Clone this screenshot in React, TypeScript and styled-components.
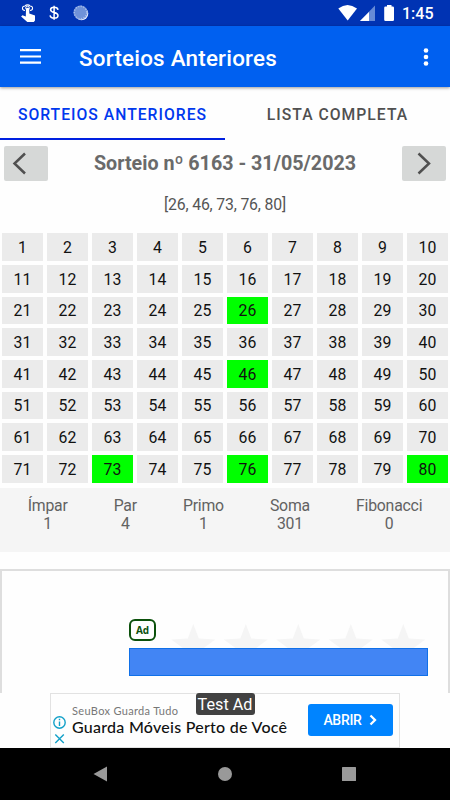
import React from "react";
import styled, { createGlobalStyle } from "styled-components";

const GlobalStyle = createGlobalStyle`
  * { box-sizing: border-box; }
  body { margin: 0; background: #fefefe; }
`;

const Screen = styled.div`
  width: 450px;
  height: 800px;
  display: flex;
  flex-direction: column;
  overflow: hidden;
  background: #fefefe;
  font-family: Roboto, sans-serif;
  color: #000;
  white-space: nowrap;
`;

const StatusBar = styled.header`
  height: 26px;
  flex: none;
  display: flex;
  align-items: center;
  background: #0033b3;
  color: #fff;
`;

const StatusIcons = styled.svg`
  display: block;
  flex: none;
`;

const Clock = styled.span`
  margin-left: 8px;
  font-size: 16px;
  font-weight: 500;
  line-height: 26px;
  padding-top: 2px;
`;

const AppBar = styled.div`
  height: 61px;
  flex: none;
  display: flex;
  align-items: center;
  padding: 0 18px 0 20px;
  background: #0060f0;
  color: #fff;
  box-shadow: 0 1px 3px rgba(0, 0, 0, 0.4);
  z-index: 1;
`;

const Title = styled.h1`
  margin: 2px auto 0 38px;
  font-size: 22.4px;
  font-weight: 500;
  line-height: 28px;
  letter-spacing: 0.22px;
`;

const Tabs = styled.nav`
  flex: none;
  height: 53px;
  display: grid;
  grid-template-columns: 1fr 1fr;
`;

const Tab = styled.div<{ $active?: boolean }>`
  display: flex;
  align-items: center;
  justify-content: center;
  padding-top: 3px;
  border-bottom: 2px solid ${(p) => (p.$active ? "#0020e0" : "transparent")};
  color: ${(p) => (p.$active ? "#0038ee" : "#505050")};
  font-size: 15.7px;
  font-weight: 500;
  letter-spacing: 1.02px;
`;

const DrawHeader = styled.div`
  flex: none;
  height: 47px;
  padding: 6px 4px;
  display: flex;
  justify-content: space-between;
`;

const ArrowButton = styled.button`
  width: 44px;
  height: 35px;
  padding: 0;
  border: 0;
  border-radius: 2px;
  background: #d6d8d7;
`;

const DrawTitle = styled.h2`
  margin: 0;
  font-size: 19.7px;
  line-height: 36px;
  font-weight: 700;
  color: #6a6a6a;
`;

const DrawNumbers = styled.div`
  flex: none;
  height: 46.3px;
  text-align: center;
  font-size: 15.8px;
  letter-spacing: -0.17px;
  line-height: 35px;
  color: #555;
`;

const NumberGrid = styled.div`
  flex: none;
  display: grid;
  grid-template-columns: repeat(10, 41px);
  grid-auto-rows: 27.67px;
  gap: 4px;
  padding: 0 2px;
`;

const Cell = styled.div<{ $drawn: boolean }>`
  display: flex;
  align-items: center;
  justify-content: center;
  padding-top: 1px;
  background: ${(p) => (p.$drawn ? "#00ff00" : "#ebebeb")};
  color: #111;
  font-size: 15.8px;
`;

const Stats = styled.div`
  flex: none;
  height: 64px;
  margin-top: 5px;
  padding-top: 9px;
  display: flex;
  justify-content: center;
  gap: 46px;
  background: #f5f5f5;
  color: #626262;
`;

const Stat = styled.div`
  text-align: center;
  font-size: 15.8px;
  letter-spacing: -0.2px;
  line-height: 18px;
`;

const AdCard = styled.section`
  flex: none;
  height: 124px;
  margin-top: 17px;
  padding: 48px 20px 0 127px;
  border: 2px solid #dedede;
  border-bottom: 0;
`;

const RatingRow = styled.div`
  height: 29px;
  display: flex;
`;

const AdBadge = styled.span`
  flex: none;
  width: 27px;
  height: 22px;
  border: 2px solid #0b500b;
  border-radius: 6px;
  color: #0b500b;
  font: 700 10px/19px "Open Sans", sans-serif;
  text-align: center;
`;

const Stars = styled.svg`
  flex: none;
  margin-left: 10px;
`;

const AdAction = styled.div`
  height: 28px;
  width: 299px;
  background: #4285f4;
  border: 1px solid #1070e8;
`;

const Banner = styled.aside`
  flex: none;
  position: relative;
  width: 350px;
  height: 55px;
  margin: 0 auto;
  display: flex;
  background: #fefefe;
  border: 1px solid #e2e2e2;
`;

const AdChoices = styled.svg`
  flex: none;
`;

const BannerCopy = styled.div`
  flex: none;
  width: 235.5px;
  padding-top: 9px;
  font-family: Lato, sans-serif;
`;

const Advertiser = styled.div`
  font-size: 11px;
  line-height: 16px;
  letter-spacing: 0.33px;
  color: #777;
`;

const Headline = styled.div`
  font-size: 16px;
  line-height: 16px;
  letter-spacing: 0.26px;
  font-weight: 500;
  color: #111;
`;

const TestLabel = styled.span`
  position: absolute;
  top: -1px;
  left: 144.5px;
  width: 59px;
  height: 22px;
  border-radius: 3px;
  background: #424242;
  color: #fff;
  font-size: 16.2px;
  line-height: 24px;
  text-align: center;
`;

const OpenButton = styled.button`
  flex: none;
  display: flex;
  align-items: center;
  justify-content: center;
  gap: 7px;
  width: 85px;
  height: 32px;
  margin-top: 10px;
  padding: 0;
  border: 0;
  border-radius: 3px;
  background: #0084ff;
  color: #fff;
  font: 500 14px Roboto, sans-serif;
  letter-spacing: -0.3px;
`;

const NavBar = styled.footer`
  flex: none;
  height: 52px;
  display: flex;
  align-items: center;
  justify-content: space-between;
  padding: 0 94px 0 93px;
  background: #000;
`;

const drawn = [26, 46, 73, 76, 80];
const numbers = Array.from({ length: 80 }, (_, i) => i + 1);
const stats = [
  ["Ímpar", "1"],
  ["Par", "4"],
  ["Primo", "1"],
  ["Soma", "301"],
  ["Fibonacci", "0"],
];

export default function App() {
  return (
    <Screen>
      <GlobalStyle />
      <StatusBar>
        <StatusIcons width="338" height="26" viewBox="0 0 338 26">
          <circle cx="27.500" cy="8" r="1.800" fill="none" stroke="#fff" strokeWidth="1" />
          <path d="M25 10.500c-3.300 0-3.500-4.500 0-4.500 1.200-1.500 4-1.500 5 0 3.500 0 3.300 4.500 0 4.500" fill="none" stroke="#fff" strokeWidth="1.100" />
          <path d="M26 8.500q1.700-1.500 3.300 0v5l5.700 2v5l-1.200 1.500h-6.500l-6.200-5.500 1.300-1.300 3.400 1.200z" fill="#fff" />
          <path d="M54.100 5.800v14M58 9.800c-.3-1.700-1.600-2.500-3.800-2.500-2.200 0-3.600.9-3.600 2.500 0 3.800 7.400 1.700 7.400 5.600 0 1.800-1.500 2.700-3.800 2.700-2.500 0-3.900-1-4.100-2.800" fill="none" stroke="#fff" strokeWidth="1.500" />
          <circle cx="81.500" cy="13.500" r="6.800" fill="#e5ecff" />
          <circle cx="80.500" cy="12.500" r="7" fill="#6f92d9" />
          <circle cx="80.500" cy="12.500" r="6.200" fill="none" stroke="#a5bbe9" strokeWidth="1.400" strokeDasharray="1.300 1.300" />
        </StatusIcons>
        <StatusIcons width="56" height="26" viewBox="338 0 56 26">
          <path d="M338.300 8.500Q347.500 1.500 357 8.500L347.700 20.500Z" fill="#fff" />
          <path d="M375 5.500V21H360Z" fill="#668ad6" />
          <path d="M369 12V21H360Z" fill="#fff" />
          <path d="M387 5h4.500v1.500h1.200q1.300 0 1.300 1.300v12q0 1.200-1.300 1.200h-7.200q-1.300 0-1.300-1.200v-12q0-1.300 1.300-1.300h1.500z" fill="#fff" />
        </StatusIcons>
        <Clock>1:45</Clock>
      </StatusBar>
      <AppBar>
        <svg width="21" height="15" viewBox="0 0 21 15">
          <path d="M0 1.200h21M0 7.500h21M0 13.700h21" stroke="#fff" strokeWidth="2.200" />
        </svg>
        <Title>Sorteios Anteriores</Title>
        <svg width="12" height="20" viewBox="0 0 12 20" fill="#fff">
          <circle cx="6" cy="3.500" r="2.300" />
          <circle cx="6" cy="10" r="2.300" />
          <circle cx="6" cy="16.500" r="2.300" />
        </svg>
      </AppBar>
      <Tabs>
        <Tab $active>SORTEIOS ANTERIORES</Tab>
        <Tab>LISTA COMPLETA</Tab>
      </Tabs>
      <DrawHeader>
        <ArrowButton aria-label="Anterior">
          <svg width="44" height="35" viewBox="0 0 44 35" fill="none" stroke="#505050" strokeWidth="2.500">
            <path d="M21 7.500 10.500 17.500 21 27.500" />
          </svg>
        </ArrowButton>
        <DrawTitle>Sorteio nº 6163 - 31/05/2023</DrawTitle>
        <ArrowButton aria-label="Próximo">
          <svg width="44" height="35" viewBox="0 0 44 35" fill="none" stroke="#505050" strokeWidth="2.500">
            <path d="M16.500 7.500 27 17.500 16.500 27.500" />
          </svg>
        </ArrowButton>
      </DrawHeader>
      <DrawNumbers>[26, 46, 73, 76, 80]</DrawNumbers>
      <NumberGrid>
        {numbers.map((n) => (
          <Cell key={n} $drawn={drawn.includes(n)}>{n}</Cell>
        ))}
      </NumberGrid>
      <Stats>
        {stats.map(([label, value]) => (
          <Stat key={label}>
            <div>{label}</div>
            <div>{value}</div>
          </Stat>
        ))}
      </Stats>
      <AdCard>
        <RatingRow>
          <AdBadge>Ad</AdBadge>
          <Stars width="270" height="29" viewBox="166 619 270 29" fill="#f5f5f5">
            {[0, 1, 2, 3, 4].map((i) => (
              <path
                key={i}
                transform={`translate(${193.300 + i * 52.500} 624)`}
                d="M0 0 5.500 14.500 22 15.500 9 25 13 40 0 31-13 40-9 25-22 15.500-5.500 14.500Z"
              />
            ))}
          </Stars>
        </RatingRow>
        <AdAction />
      </AdCard>
      <Banner>
        <AdChoices width="21" height="53" viewBox="0 0 21 53" fill="none" stroke="#12a0c8" strokeWidth="1.400">
          <circle cx="8.500" cy="28.500" r="5.700" />
          <path d="M8.500 27.500v4.500M8.500 24.800v1.500M4.300 40.500l8.500 8.500M12.800 40.500 4.300 49" />
        </AdChoices>
        <BannerCopy>
          <Advertiser>SeuBox Guarda Tudo</Advertiser>
          <Headline>Guarda Móveis Perto de Você</Headline>
        </BannerCopy>
        <OpenButton>
          ABRIR
          <svg width="8" height="12" viewBox="0 0 8 12" fill="none" stroke="#fff" strokeWidth="2.300">
            <path d="m1.500 1.500 4.500 4.500-4.500 4.500" />
          </svg>
        </OpenButton>
        <TestLabel>Test Ad</TestLabel>
      </Banner>
      <NavBar>
        <svg width="14" height="16" viewBox="0 0 14 16" fill="#999"><path d="M14 .5v15L.5 8Z" /></svg>
        <svg width="14" height="14" viewBox="0 0 14 14" fill="#999"><circle cx="7" cy="7" r="7" /></svg>
        <svg width="14" height="14" viewBox="0 0 14 14" fill="#999"><rect width="14" height="14" rx=".5" /></svg>
      </NavBar>
    </Screen>
  );
}
